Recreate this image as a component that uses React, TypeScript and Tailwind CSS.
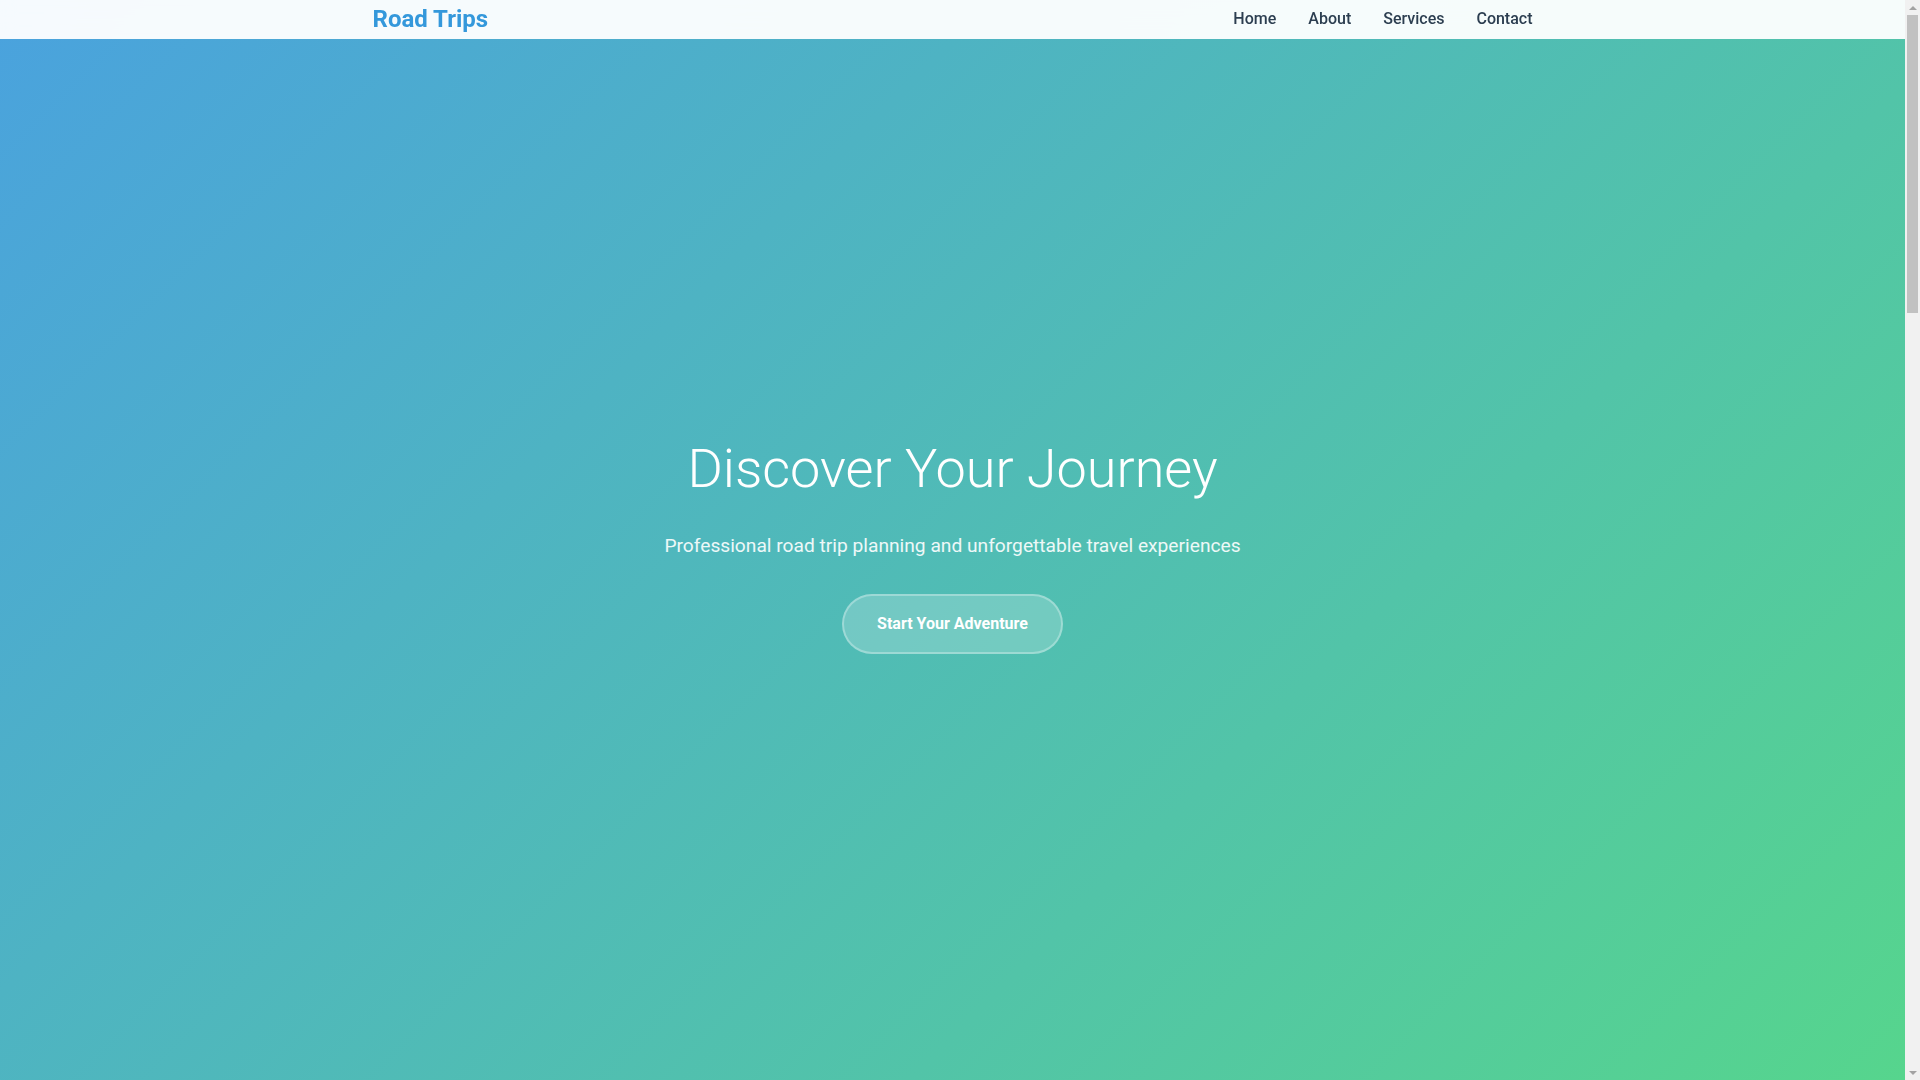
import React from "react";

const navLinks = ["Home", "About", "Services", "Contact"];

function Scrollbar() {
  // classic browser scrollbar as shown in the screenshot
  return (
    <div className="w-[15px] shrink-0 h-screen bg-[#f1f1f1] flex flex-col items-center">
      <div className="h-[15px] w-full flex items-center justify-center">
        <div className="w-0 h-0 border-x-[4px] border-x-transparent border-b-[4px] border-b-[#a3a3a3]" />
      </div>
      <div className="w-[11px] h-[298px] bg-[#c1c1c1]" />
      <div className="flex-1" />
      <div className="h-[15px] w-full flex items-center justify-center">
        <div className="w-0 h-0 border-x-[4px] border-x-transparent border-t-[4px] border-t-[#a3a3a3]" />
      </div>
    </div>
  );
}

export default function App() {
  return (
    <div className="h-screen flex overflow-hidden bg-white font-['Roboto','Liberation_Sans',sans-serif] text-[#2c3e50]">
      <div className="flex-1 min-w-0 relative">
        {/* Header over the hero */}
        <header className="absolute top-0 left-0 right-0 z-50 bg-white/95 backdrop-blur">
          <div className="max-w-[1200px] mx-auto px-5 h-[39px] pb-[2px] flex items-center justify-between">
            <a href="#" className="text-2xl font-bold text-[#3498db] leading-none">
              Road Trips
            </a>
            <nav className="flex items-center gap-8">
              {navLinks.map((link) => (
                <a key={link} href="#" className="text-base font-medium text-[#2c3e50] leading-none">
                  {link}
                </a>
              ))}
            </nav>
          </div>
        </header>

        {/* Hero */}
        <section className="h-screen pt-[8px] flex flex-col items-center justify-center text-center text-white bg-[linear-gradient(135deg,#4aa2de,#56d58d)]">
          <h1 className="text-[54px] font-light leading-[67px] mb-[30px]">Discover Your Journey</h1>
          <p className="text-[19.2px] leading-7 text-white/90 mb-[34px]">
            Professional road trip planning and unforgettable travel experiences
          </p>
          <a
            href="#"
            className="px-[33px] py-[16px] rounded-full border-2 border-white/30 bg-white/20 text-base leading-6 font-bold text-white"
          >
            Start Your Adventure
          </a>
        </section>
      </div>
      <Scrollbar />
    </div>
  );
}
